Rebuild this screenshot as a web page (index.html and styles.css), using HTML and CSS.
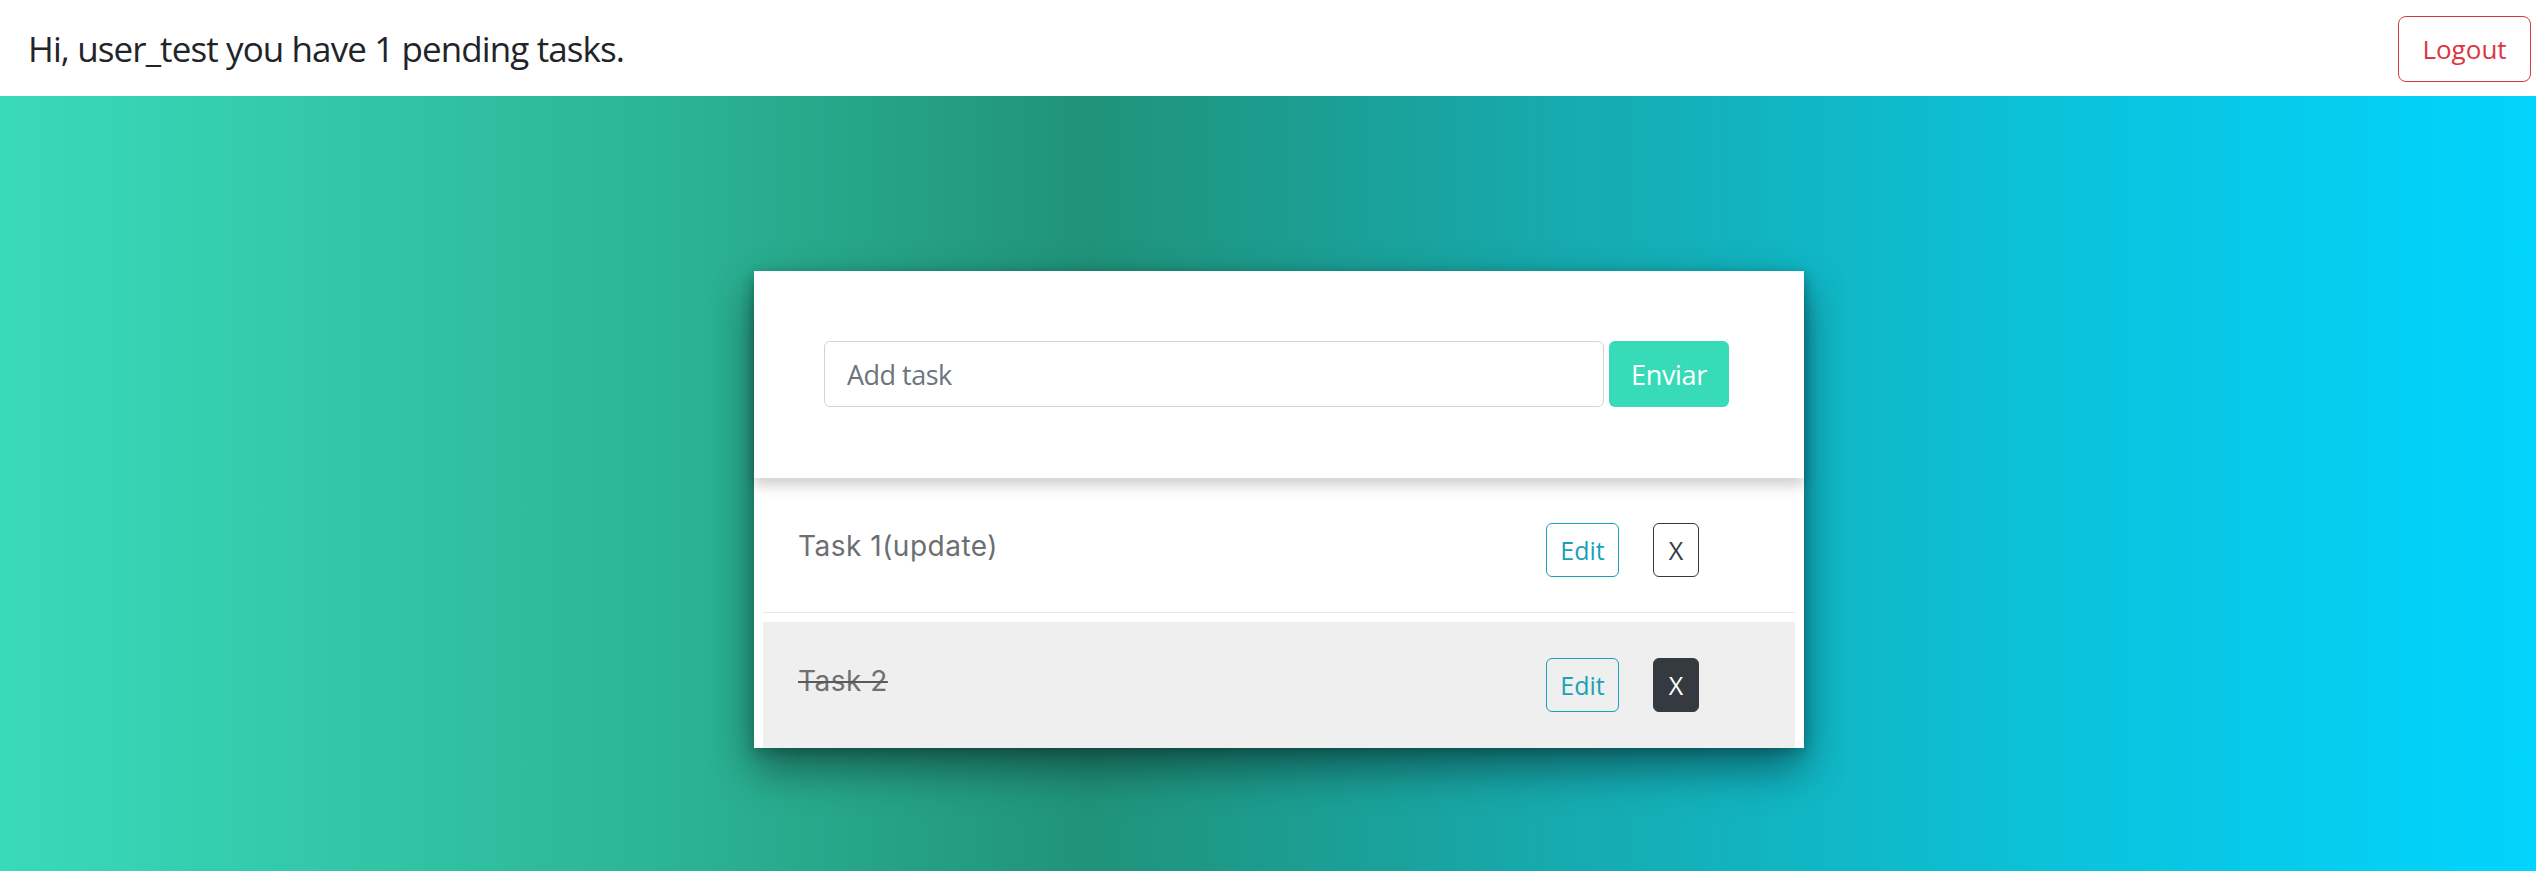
FILE: index.html
```html
<!DOCTYPE html>
<html lang="en">
<head>
<meta charset="utf-8">
<title>Tasks</title>
<link rel="stylesheet" href="styles.css">
</head>
<body>
<header class="topbar">
  <span class="greeting">Hi, user_test you have 1 pending tasks.</span>
  <button class="btn btn-logout">Logout</button>
</header>
<main class="stage">
  <section class="card">
    <form class="add-form">
      <input class="task-input" type="text" placeholder="Add task">
      <button class="btn btn-send" type="button">Enviar</button>
    </form>
    <ul class="task-list">
      <li class="task">
        <span class="task-name">Task 1(update)</span>
        <div class="task-actions">
          <button class="btn btn-edit">Edit</button>
          <button class="btn btn-del">X</button>
        </div>
      </li>
      <li class="task task-done">
        <span class="task-name">Task 2</span>
        <div class="task-actions">
          <button class="btn btn-edit">Edit</button>
          <button class="btn btn-del btn-del-dark">X</button>
        </div>
      </li>
    </ul>
  </section>
</main>
</body>
</html>
```

FILE: styles.css
```css
* { box-sizing: border-box; }
html, body { margin: 0; padding: 0; }
body {
  width: 2536px;
  height: 871px;
  overflow: hidden;
  font-family: "Open Sans", "Noto Sans", sans-serif;
  background: linear-gradient(90deg, #39dabb 0%, #2cb697 25%, #20937a 43%, #16abb0 62%, #0bc3dc 82%, #01d4fe 100%);
}
.topbar {
  height: 96px;
  background: #ffffff;
  display: flex;
  align-items: center;
  justify-content: space-between;
  padding: 0 5px 0 28px;
}
.greeting {
  font-size: 35px;
  color: #212529;
  letter-spacing: -0.9px;
}
.btn {
  font-family: "Open Sans", "Noto Sans", sans-serif;
  background: transparent;
  cursor: pointer;
  display: inline-flex;
  align-items: center;
  justify-content: center;
  padding: 0;
}
.btn-logout {
  width: 133px;
  height: 66px;
  border: 1.5px solid #dc3545;
  border-radius: 8px;
  color: #dc3545;
  font-size: 26px;
  margin-top: 2px;
}
.stage {
  display: flex;
  justify-content: center;
  padding: 175px 0 0 22px;
}
.card {
  width: 1050px;
  background: #ffffff;
  box-shadow: 0 20px 40px rgba(0, 0, 0, 0.45), 0 4px 12px rgba(0, 0, 0, 0.2);
}
.add-form {
  position: relative;
  z-index: 1;
  display: flex;
  gap: 5px;
  padding: 70px 75px 71px 70px;
  background: #ffffff;
  box-shadow: 0 8px 12px rgba(0, 0, 0, 0.18);
  margin: 0;
}
.task-input {
  width: 780px;
  height: 66px;
  border: 1.5px solid #ced4da;
  border-radius: 6px;
  padding: 0 22px;
  font-family: "Open Sans", "Noto Sans", sans-serif;
  font-size: 27px;
  color: #495057;
  letter-spacing: -0.5px;
}
.task-input::placeholder { color: #6c757d; }
.btn-send {
  width: 120px;
  height: 66px;
  border: none;
  border-radius: 6px;
  background: #38dbb8;
  color: #ffffff;
  font-size: 27px;
  letter-spacing: -0.3px;
}
.task-list {
  list-style: none;
  margin: 0;
  padding: 0 9px;
}
.task {
  display: flex;
  align-items: center;
  justify-content: space-between;
  height: 126px;
  margin-top: 9px;
  padding: 0 96px 0 35px;
  border-bottom: 1px solid #e6e6e6;
  background: #ffffff;
}
.task-done {
  background: #efefef;
  border-bottom: none;
}
.task-name {
  font-family: "Inter", "Lato", sans-serif;
  font-size: 28px;
  letter-spacing: 0.5px;
  color: #6c6f72;
  margin-top: -8px;
}
.task-done .task-name {
  text-decoration: line-through;
  text-decoration-color: #5a5a5a;
  text-decoration-thickness: 2px;
  color: #707070;
}
.task-actions {
  display: flex;
  gap: 34px;
}
.btn-edit {
  width: 73px;
  height: 54px;
  border: 1.5px solid #17a2b8;
  border-radius: 6px;
  color: #17a2b8;
  font-size: 25px;
}
.btn-del {
  width: 46px;
  height: 54px;
  border: 1.5px solid #343a40;
  border-radius: 6px;
  color: #343a40;
  font-size: 25px;
}
.btn-del-dark {
  background: #343a40;
  color: #ffffff;
}
```
